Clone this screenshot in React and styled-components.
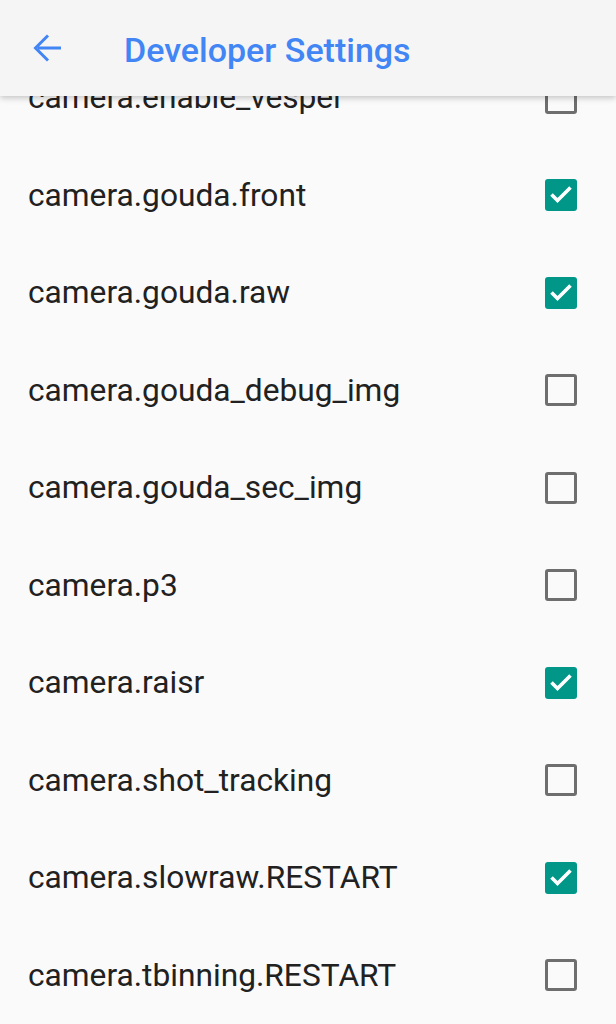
import React from 'react'
import styled, { createGlobalStyle } from 'styled-components'

const GlobalStyle = createGlobalStyle`
  html, body {
    margin: 0;
    padding: 0;
    background: #fafafa;
  }
  body {
    font-family: Roboto, "Noto Sans", sans-serif;
  }
`

const flags = [
  { name: 'camera.enable_vesper', on: false },
  { name: 'camera.gouda.front', on: true },
  { name: 'camera.gouda.raw', on: true },
  { name: 'camera.gouda_debug_img', on: false },
  { name: 'camera.gouda_sec_img', on: false },
  { name: 'camera.p3', on: false },
  { name: 'camera.raisr', on: true },
  { name: 'camera.shot_tracking', on: false },
  { name: 'camera.slowraw.RESTART', on: true },
  { name: 'camera.tbinning.RESTART', on: false },
]

const Check = ({ on }) => {
  return (
    <CheckBox $on={on}>
      {on && (
        <svg width="32" height="32" viewBox="0 0 32 32">
          <path d="M6.5 15.5l6 6L25.5 8.5" fill="none" stroke="#fff" strokeWidth="3.6" />
        </svg>
      )}
    </CheckBox>
  )
}

const App = () => {
  return (
    <Page>
      <GlobalStyle />
      <AppBar>
        <BackButton>
          <svg width="32" height="32" viewBox="0 0 32 32">
            <path d="M29 16H6M16 3.5L3.5 16 16 28.5" fill="none" stroke="#4285f4" strokeWidth="3" />
          </svg>
        </BackButton>
        <Title>Developer Settings</Title>
      </AppBar>
      <List>
        {flags.map((flag, i) => (
          <Row key={i}>
            <Label>{flag.name}</Label>
            <Check on={flag.on} />
          </Row>
        ))}
      </List>
    </Page>
  )
}

const Page = styled.div`
  position: relative;
  width: 616px;
  height: 1024px;
  overflow: hidden;
  background: #fafafa;
`

const AppBar = styled.header`
  position: absolute;
  top: 0;
  left: 0;
  right: 0;
  z-index: 2;
  height: 96px;
  display: flex;
  align-items: center;
  background: #f5f5f5;
  box-shadow: 0 2px 6px rgba(0, 0, 0, 0.22);
`

const BackButton = styled.div`
  width: 32px;
  height: 32px;
  margin-left: 32px;
  display: flex;
`

const Title = styled.h1`
  margin: 3px 0 0 60px;
  font-family: Roboto, sans-serif;
  font-weight: 500;
  font-size: 34px;
  color: #4285f4;
  letter-spacing: 0;
`

const List = styled.div`
  padding-top: 49px;
  display: flex;
  flex-direction: column;
`

const Row = styled.div`
  height: 97.5px;
  display: flex;
  align-items: center;
  justify-content: space-between;
  padding: 0 39px 0 28px;
`

const Label = styled.span`
  font-family: Roboto, sans-serif;
  font-size: 31.7px;
  color: #212121;
`

const CheckBox = styled.div`
  box-sizing: border-box;
  width: 32px;
  height: 32px;
  border-radius: 3px;
  background: ${p => (p.$on ? '#009688' : 'transparent')};
  border: ${p => (p.$on ? 'none' : '3px solid #6e6e6e')};
  display: flex;
`

export default App
